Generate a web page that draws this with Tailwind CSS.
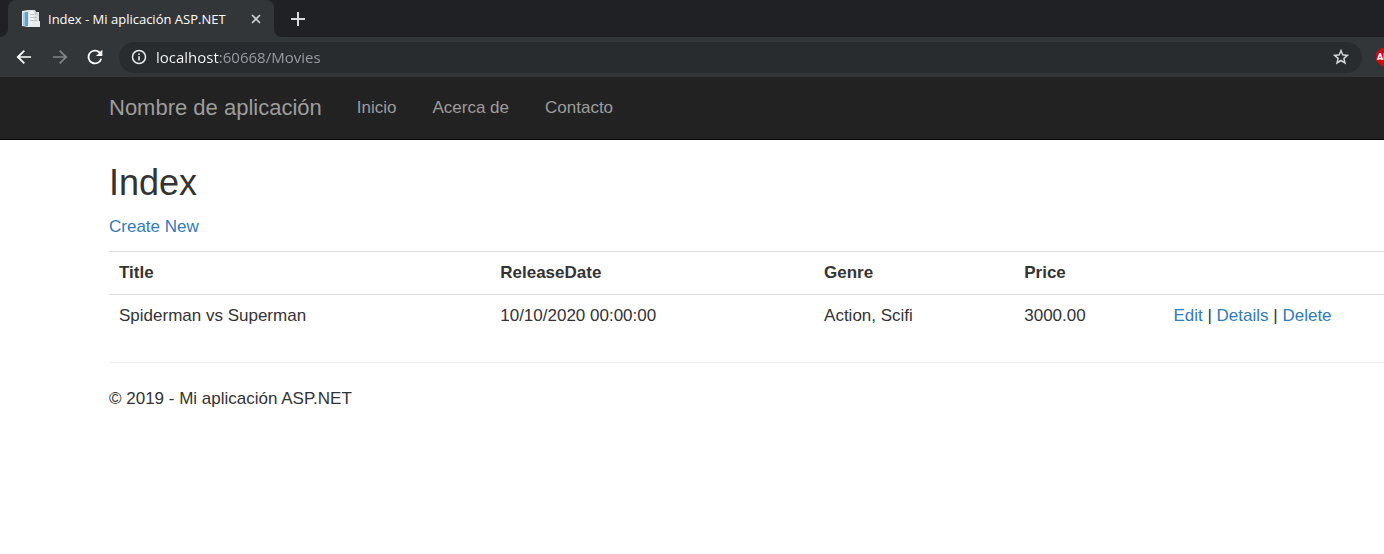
<!DOCTYPE html>
<html lang="es">
<head>
<meta charset="utf-8">
<title>Index - Mi aplicación ASP.NET</title>
<script src="https://cdn.jsdelivr.net/npm/@tailwindcss/browser@4"></script>
</head>
<body class="min-h-screen overflow-x-hidden bg-white font-['Liberation_Sans',Arial,sans-serif] text-[17px] leading-6 text-[#333333]">
<header class="font-['Open_Sans',sans-serif]">
  <div class="flex h-[37px] items-end bg-[#202124] pl-2">
    <div class="relative flex h-full w-[266px] items-center rounded-t-lg bg-[#323639] pr-2.5 pl-3.5">
      <svg class="absolute bottom-0 -left-2 size-2" viewBox="0 0 8 8" aria-hidden="true"><path d="M8 0v8H0a8 8 0 0 0 8-8z" fill="#323639"/></svg>
      <svg class="absolute -right-2 bottom-0 size-2" viewBox="0 0 8 8" aria-hidden="true"><path d="M0 0v8h8a8 8 0 0 1-8-8z" fill="#323639"/></svg>
      <svg class="mr-2 size-[18px] shrink-0" viewBox="0 0 18 18" aria-hidden="true">
        <path d="M0 1l6-1v17l-6-1z" fill="#dcebf4"/><path d="M1 3l2-1v14H1z" fill="#9fcbe8"/><path d="M3 2h3v14H3z" fill="#5fa3d3"/>
        <path d="M6 0h7l1 2h3v15H6z" fill="#dde1e4"/><path d="M7 1h5v14H7z" fill="#f2f4f5"/><path d="M8 4h4v1H8zM8 7h7v1H8zM8 10h7v1H8z" fill="#bcc4c9"/><path d="M6 14l5-2 7-1v6H6z" fill="#e9ebec"/><path d="M13 1l4 4h-4z" fill="#c5cbd0"/>
      </svg>
      <span class="grow truncate text-[13px] text-white">Index - Mi aplicación ASP.NET</span>
      <button aria-label="Cerrar pestaña" class="grid size-4 shrink-0 place-items-center text-[#d0d2d4]"><svg class="size-3" viewBox="0 0 12 12" fill="none" stroke="currentColor" stroke-width="1.6"><path d="M2 2l8 8M10 2l-8 8"/></svg></button>
    </div>
    <button aria-label="Nueva pestaña" class="ml-3.5 grid h-[37px] w-5 place-items-center text-[#d8dadc]"><svg class="size-[14px]" viewBox="0 0 14 14" fill="none" stroke="currentColor" stroke-width="2"><path d="M7 0v14M0 7h14"/></svg></button>
  </div>
  <div class="flex h-10 items-center overflow-hidden bg-[#323639] pl-3.5">
    <button aria-label="Atrás" class="size-5 shrink-0 text-white"><svg viewBox="0 0 24 24" fill="currentColor"><path d="M20.5 11H7.2l5.9-5.9L11.7 3.600 3 12l8.700 8.400 1.400-1.500L7.200 13h13.300z"/></svg></button>
    <button aria-label="Adelante" class="ml-4 size-5 shrink-0 text-[#808386]"><svg viewBox="0 0 24 24" fill="currentColor"><path d="M3.500 11h13.300l-5.900-5.900 1.400-1.500L21 12l-8.700 8.400-1.400-1.500 5.900-5.900H3.500z"/></svg></button>
    <button aria-label="Recargar" class="ml-3.5 size-[22px] shrink-0 text-white"><svg viewBox="0 0 24 24" fill="currentColor"><path d="M17.650 6.350A8 8 0 1 0 19.730 14h-2.080A6 6 0 1 1 12 6c1.660 0 3.140.69 4.220 1.780L13 11h7V4z"/></svg></button>
    <div class="ml-[13px] flex h-[31px] min-w-0 grow items-center rounded-full bg-[#282c2f] pr-3 pl-3">
      <svg class="size-4 shrink-0" viewBox="0 0 16 16" aria-hidden="true"><circle cx="8" cy="8" r="6.500" fill="none" stroke="#e8eaed" stroke-width="1.500"/><path d="M7.200 4.500h1.600v1.600H7.200zM7.200 7.200h1.600v4.300H7.200z" fill="#e8eaed"/></svg>
      <input type="text" aria-label="Dirección" value="localhost:60668/Movies" class="ml-[9px] min-w-0 grow bg-[linear-gradient(to_right,#ffffff_63px,#9aa0a6_63px)] bg-clip-text text-[15px] text-transparent outline-none">
      <button aria-label="Añadir a marcadores" class="size-[18px] shrink-0 text-[#d5d7d9]"><svg viewBox="0 0 24 24" fill="currentColor"><path d="M23 9.150l-7.950-.68L12 1.100 8.950 8.470 1 9.150l6.040 5.230L5.200 22.100 12 18l6.800 4.100-1.840-7.720L23 9.150zM12 15.400l-3.760 2.270 1-4.280-3.320-2.880 4.380-.38L12 6.100l1.710 4.040 4.380.38-3.320 2.880 1 4.280L12 15.400z"/></svg></button>
    </div>
    <button aria-label="Adblock Plus" class="-mr-2.5 ml-3.5 size-[18px] shrink-0"><svg viewBox="0 0 18 18"><path d="M5.300 0h7.400L18 5.300v7.400L12.700 18H5.300L0 12.700V5.300z" fill="#c70d12"/><text x="1" y="12" font-family="Roboto" font-weight="900" font-size="9" fill="#fff">ABP</text></svg></button>
  </div>
</header>
<nav class="flex h-[63px] items-center border-b border-[#080808] bg-[#222222] pl-[109px] text-[#9d9d9d]">
  <a href="#" class="text-[22px]">Nombre de aplicación</a>
  <a href="#" class="ml-[35px]">Inicio</a>
  <a href="#" class="ml-9">Acerca de</a>
  <a href="#" class="ml-9">Contacto</a>
</nav>
<main class="pl-[109px]">
  <h2 class="pt-[23px] text-[36px] leading-10">Index</h2>
  <p class="mt-3"><a href="#" class="text-[#337ab7]">Create New</a></p>
  <table class="mt-3 w-full table-fixed border-collapse text-left">
    <thead>
      <tr class="h-[43px] border-y border-[#dddddd]">
        <th class="w-[29.9%] px-2.5">Title</th>
        <th class="w-[25.4%] px-2.5">ReleaseDate</th>
        <th class="w-[15.7%] px-2.5">Genre</th>
        <th class="w-[11.7%] px-2.5">Price</th>
        <th class="px-2.5"></th>
      </tr>
    </thead>
    <tbody>
      <tr class="h-[43px]">
        <td class="px-2.5">Spiderman vs Superman</td>
        <td class="px-2.5">10/10/2020 00:00:00</td>
        <td class="px-2.5">Action, Scifi</td>
        <td class="px-2.5">3000.00</td>
        <td class="px-2.5"><a href="#" class="text-[#337ab7]">Edit</a> | <a href="#" class="text-[#337ab7]">Details</a> | <a href="#" class="text-[#337ab7]">Delete</a></td>
      </tr>
    </tbody>
  </table>
  <footer class="mt-6 border-t border-[#eeeeee] pt-6"><p>© 2019 - Mi aplicación ASP.NET</p></footer>
</main>
</body>
</html>
